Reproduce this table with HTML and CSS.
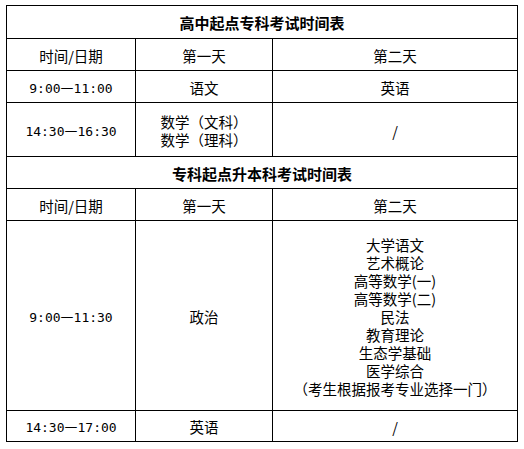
FILE: index.html
```html
<!DOCTYPE html>
<html lang="zh">
<head>
<meta charset="utf-8">
<title>考试时间表</title>
<link rel="stylesheet" href="styles.css">
</head>
<body>
<table class="schedule">
  <colgroup>
    <col class="c-time">
    <col class="c-day1">
    <col class="c-day2">
  </colgroup>
  <tbody>
    <tr class="r-title"><th colspan="3">高中起点专科考试时间表</th></tr>
    <tr class="r-std"><td>时间/日期</td><td>第一天</td><td>第二天</td></tr>
    <tr class="r-std"><td class="time">9:00<span class="dash">—</span>11:00</td><td>语文</td><td>英语</td></tr>
    <tr class="r-two"><td class="time">14:30<span class="dash">—</span>16:30</td><td>数学（文科）<br>数学（理科）</td><td>/</td></tr>
    <tr class="r-std"><th colspan="3">专科起点升本科考试时间表</th></tr>
    <tr class="r-std"><td>时间/日期</td><td>第一天</td><td>第二天</td></tr>
    <tr class="r-tall"><td class="time">9:00<span class="dash">—</span>11:30</td><td>政治</td><td class="list">大学语文<br>艺术概论<br>高等数学(一)<br>高等数学(二)<br>民法<br>教育理论<br>生态学基础<br>医学综合<br>（考生根据报考专业选择一门）</td></tr>
    <tr class="r-last"><td class="time">14:30<span class="dash">—</span>17:00</td><td>英语</td><td>/</td></tr>
  </tbody>
</table>
</body>
</html>
```

FILE: styles.css
```css
html, body {
  margin: 0;
  padding: 0;
  background: #ffffff;
}

body {
  padding: 5px 0 0 6px;
  font-family: "Noto Sans CJK SC", "Noto Sans", sans-serif;
  font-size: 14.5px;
  color: #000000;
}

.schedule {
  border-collapse: collapse;
  table-layout: fixed;
  width: 511px;
}

.c-time { width: 129px; }
.c-day1 { width: 137px; }
.c-day2 { width: 245px; }

.schedule th,
.schedule td {
  border: 1px solid #000000;
  padding: 2px 0 0 0;
  text-align: center;
  vertical-align: middle;
  line-height: 18px;
}

.schedule th {
  font-size: 15px;
  font-weight: bold;
}

.r-title { height: 33px; }
.r-std { height: 32px; }
.r-two { height: 54px; }
.r-tall { height: 190px; }
.r-last { height: 31px; }

.time {
  font-family: "DejaVu Sans Mono", "Noto Sans CJK SC", monospace;
  font-size: 13px;
}

.dash {
  font-family: "Noto Sans CJK SC", sans-serif;
  font-size: 14.5px;
}
```
